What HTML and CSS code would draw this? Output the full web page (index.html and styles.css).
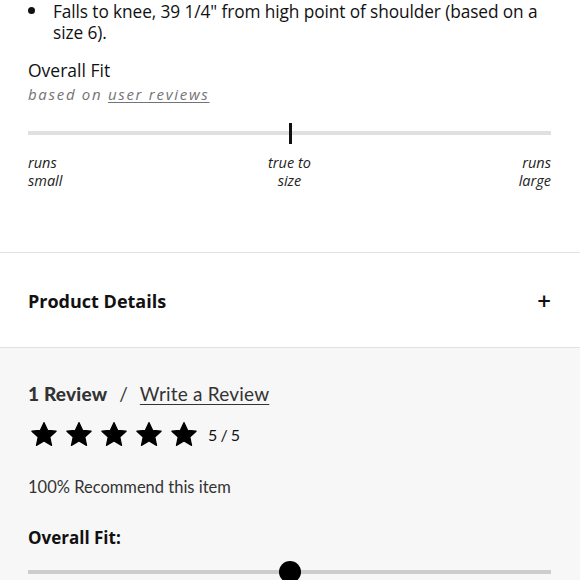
FILE: index.html
```html
<!DOCTYPE html>
<html lang="en">
<head>
<meta charset="utf-8">
<title>Product</title>
<link rel="stylesheet" href="styles.css">
</head>
<body>
<section class="top">
  <ul class="bullets">
    <li>Falls to knee, 39 1/4" from high point of shoulder (based on a size 6).</li>
  </ul>
  <div class="fit">
    <div class="fit-title">Overall Fit</div>
    <div class="fit-sub">based on <a href="#">user reviews</a></div>
    <div class="track"><span class="marker"></span></div>
    <div class="labels">
      <span class="lab-left">runs<br>small</span>
      <span class="lab-mid">true to<br>size</span>
      <span class="lab-right">runs<br>large</span>
    </div>
  </div>
</section>
<section class="accordion">
  <h2 class="acc-title">Product Details</h2>
  <span class="plus">+</span>
</section>
<section class="reviews">
  <div class="rev-head"><span class="rev-count">1 Review</span><span class="slash">/</span><a href="#" class="write">Write a Review</a></div>
  <div class="rating">
    <div class="stars">
      <svg class="star" viewBox="0 0 24 22"><polygon points="12,1.2 15.1,7.8 22.4,8.6 17,13.6 18.5,20.8 12,17.1 5.5,20.8 7,13.6 1.6,8.6 8.9,7.8"/></svg>
      <svg class="star" viewBox="0 0 24 22"><polygon points="12,1.2 15.1,7.8 22.4,8.6 17,13.6 18.5,20.8 12,17.1 5.5,20.8 7,13.6 1.6,8.6 8.9,7.8"/></svg>
      <svg class="star" viewBox="0 0 24 22"><polygon points="12,1.2 15.1,7.8 22.4,8.6 17,13.6 18.5,20.8 12,17.1 5.5,20.8 7,13.6 1.6,8.6 8.9,7.8"/></svg>
      <svg class="star" viewBox="0 0 24 22"><polygon points="12,1.2 15.1,7.8 22.4,8.6 17,13.6 18.5,20.8 12,17.1 5.5,20.8 7,13.6 1.6,8.6 8.9,7.8"/></svg>
      <svg class="star" viewBox="0 0 24 22"><polygon points="12,1.2 15.1,7.8 22.4,8.6 17,13.6 18.5,20.8 12,17.1 5.5,20.8 7,13.6 1.6,8.6 8.9,7.8"/></svg>
    </div>
    <span class="score">5 / 5</span>
  </div>
  <div class="recommend">100% Recommend this item</div>
  <div class="fit2-title">Overall Fit:</div>
  <div class="track2"><span class="dot"></span></div>
</section>
</body>
</html>
```
FILE: styles.css
```css
html, body {
  margin: 0;
  padding: 0;
  background: #fff;
}
body {
  width: 580px;
  overflow: hidden;
  font-family: "Open Sans", "Noto Sans", sans-serif;
  color: #111;
}
.top {
  padding: 1px 29px 62px 28px;
}
.bullets {
  margin: 0;
  padding: 0 0 0 25px;
  list-style: none;
}
.bullets li {
  position: relative;
  font-size: 17.3px;
  line-height: 21px;
  letter-spacing: -0.1px;
}
.bullets li::before {
  content: "";
  position: absolute;
  left: -25px;
  top: 6px;
  width: 7px;
  height: 7px;
  border-radius: 50%;
  background: #111;
}
.fit-title {
  margin-top: 15px;
  font-size: 17.5px;
  line-height: 24px;
}
.fit-sub {
  margin-top: 2px;
  font-size: 15px;
  line-height: 20px;
  font-style: italic;
  color: #747474;
  letter-spacing: 1.7px;
}
.fit-sub a {
  color: #747474;
  text-decoration: underline;
  text-underline-offset: 2px;
}
.track {
  position: relative;
  margin-top: 27px;
  height: 4px;
  background: #e0e0e0;
}
.marker {
  position: absolute;
  left: 261px;
  top: -8px;
  width: 3px;
  height: 21px;
  background: #111;
}
.labels {
  margin-top: 19px;
  display: grid;
  grid-template-columns: 1fr 1fr 1fr;
  font-size: 14.5px;
  line-height: 18px;
  font-style: italic;
  color: #222;
}
.lab-mid { text-align: center; }
.lab-right { text-align: right; }
.accordion {
  display: flex;
  align-items: center;
  justify-content: space-between;
  padding: 2px 29px 0 28px;
  box-sizing: border-box;
  border-top: 1px solid #e2e2e2;
  border-bottom: 1px solid #e2e2e2;
  height: 96px;
}
.acc-title {
  margin: 0;
  font-size: 18px;
  font-weight: 700;
  line-height: 24px;
}
.plus {
  font-size: 24px;
  font-weight: 600;
  line-height: 24px;
}
.reviews {
  background: #f7f7f7;
  padding: 34px 29px 20px 28px;
  font-family: "Lato", "Open Sans", sans-serif;
  color: #333;
}
.rev-head {
  display: flex;
  align-items: baseline;
  font-size: 19px;
  line-height: 24px;
}
.rev-count { font-weight: 900; letter-spacing: 0.2px; }
.slash { margin: 0 12px 0 12px; }
.write {
  color: #333;
  text-decoration: underline;
  text-underline-offset: 3px;
  text-decoration-thickness: 1px;
  letter-spacing: 0.2px;
}
.rating {
  display: flex;
  align-items: center;
  margin-top: 15px;
}
.stars {
  display: flex;
  gap: 7px;
  margin-left: 2px;
}
.star {
  width: 28px;
  height: 26px;
  fill: #000;
  stroke: #000;
  stroke-width: 1;
  stroke-linejoin: round;
}
.score {
  margin-left: 10px;
  font-size: 16px;
  color: #111;
  word-spacing: -1px;
}
.recommend {
  margin-top: 30px;
  font-size: 16.5px;
  line-height: 20px;
}
.fit2-title {
  margin-top: 29px;
  font-family: "Open Sans", sans-serif;
  font-size: 17px;
  font-weight: 700;
  line-height: 24px;
  color: #111;
}
.track2 {
  position: relative;
  margin-top: 20px;
  height: 4px;
  background: #cdcdcd;
}
.dot {
  position: absolute;
  left: 251px;
  top: -9px;
  width: 22px;
  height: 22px;
  border-radius: 50%;
  background: #000;
}
```
